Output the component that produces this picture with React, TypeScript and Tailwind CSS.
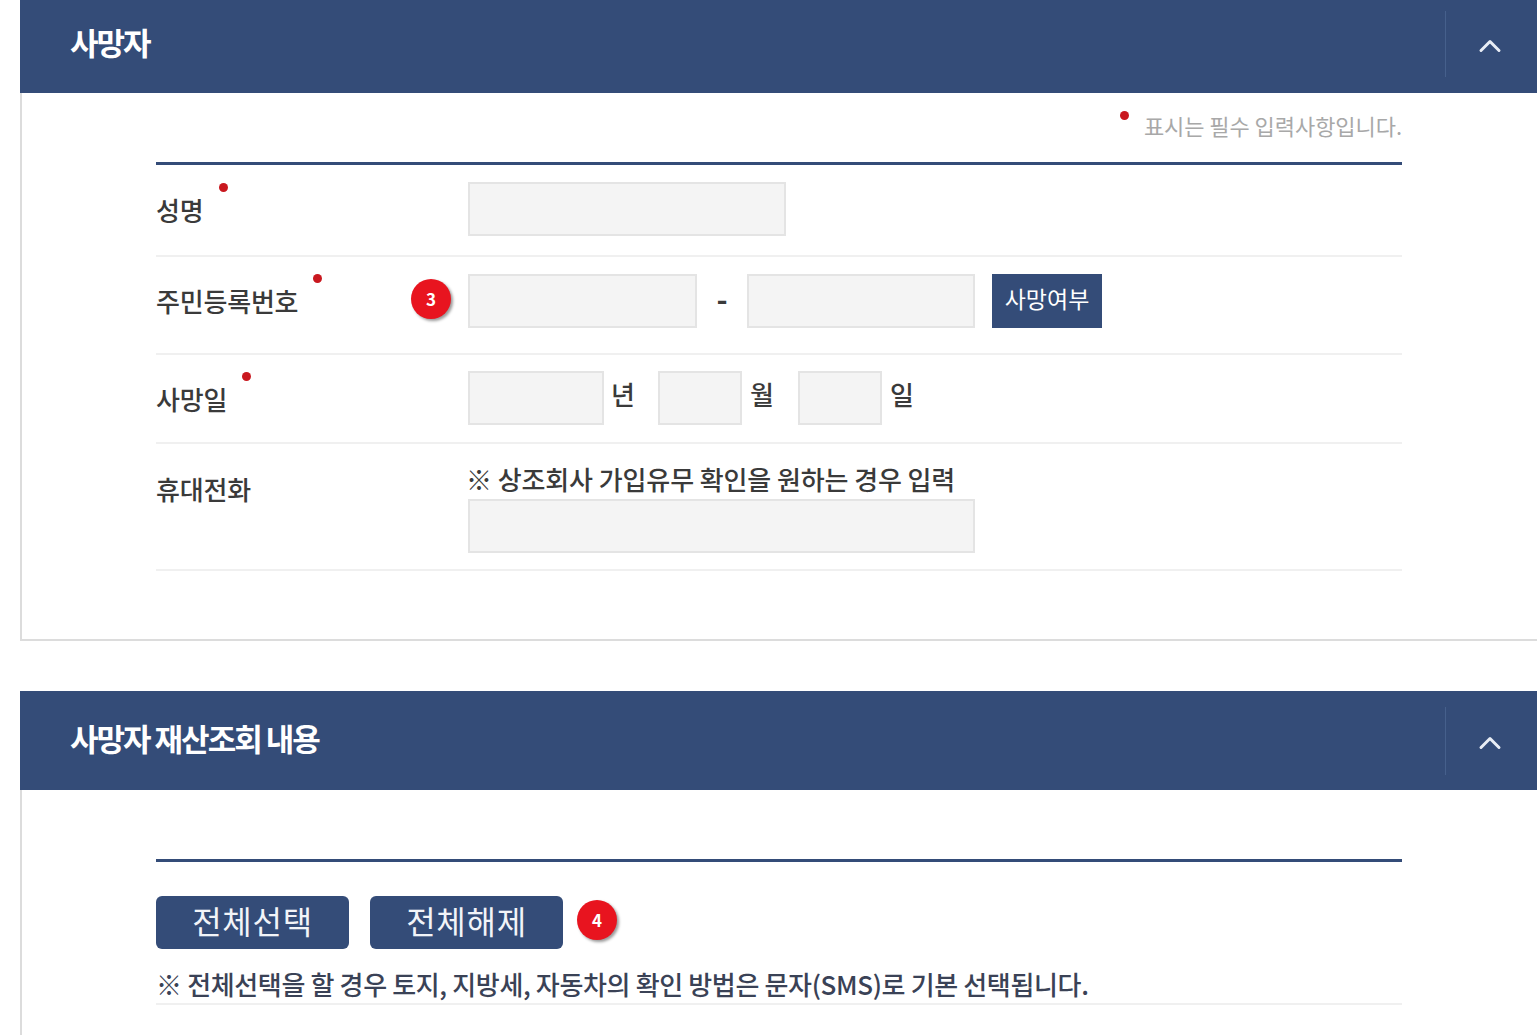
import { ChevronUp } from "lucide-react";

const font = { fontFamily: '"Noto Sans CJK KR", "Noto Sans", sans-serif' };

function Dot({ className }: { className: string }) {
  return <span className={`absolute h-[9px] w-[9px] rounded-full bg-[#c9181f] ${className}`} />;
}

function Badge({ n, className }: { n: number; className: string }) {
  return (
    <span
      className={`absolute flex h-[40px] w-[40px] items-center justify-center rounded-full bg-[#e8141f] text-[17px] font-bold text-white shadow-[2px_2px_3px_rgba(0,0,0,0.4)] ${className}`}
    >
      {n}
    </span>
  );
}

function Field({ className }: { className: string }) {
  return <div className={`h-[54px] border-2 border-[#e4e4e4] bg-[#f4f4f4] ${className}`} />;
}

function Header({ title, className, titleClass, dividerClass }: { title: string; className: string; titleClass: string; dividerClass: string }) {
  return (
    <div className={`flex items-center justify-between bg-[#344c78] ${className}`}>
      <h2 className={`ml-[50px] text-[31px] font-bold tracking-[-2px] text-white ${titleClass}`}>{title}</h2>
      <div className={`flex w-[92px] items-center justify-center border-l border-[#46608c] pr-[4px] pt-[3px] ${dividerClass}`}>
        <ChevronUp className="h-[36px] w-[36px] text-[#e8edf5]" strokeWidth={2} />
      </div>
    </div>
  );
}

function Label({ text, dot, className }: { text: string; dot?: string; className: string }) {
  return (
    <div className={`relative w-[312px] shrink-0 text-[26px] font-medium leading-[36px] tracking-[-0.2px] text-[#3a3a3a] ${className}`}>
      {text}
      {dot && <Dot className={dot} />}
    </div>
  );
}

export default function App() {
  return (
    <div className="h-[1035px] w-full overflow-hidden bg-white pl-[20px]" style={font}>
      <section className="h-[641px] border-b-2 border-l-2 border-[#dcdcdc]">
        <Header title="사망자" className="-ml-[2px] h-[93px]" titleClass="mb-[8px]" dividerClass="mb-[5px] h-[66px]" />
        <div className="ml-[134px] w-[1246px]">
          <div className="relative flex h-[69px] justify-end pt-[16px] text-[22px] leading-[32px] tracking-[-0.05px] text-[#a8a8a8]">
            <Dot className="left-[964px] top-[18px]" />
            표시는 필수 입력사항입니다.
          </div>
          <div className="border-t-[3px] border-[#344c78]">
            <div className="flex h-[92px] border-b-2 border-[#f0f0f0] pt-[17px]">
              <Label text="성명" dot="left-[63px] top-[1px]" className="pt-[10px]" />
              <Field className="w-[318px]" />
            </div>
            <div className="flex h-[98px] border-b-2 border-[#f0f0f0] pt-[17px]">
              <div className="relative">
                <Label text="주민등록번호" dot="left-[157px] top-[0px]" className="pt-[9px]" />
                <Badge n={3} className="left-[255px] top-[5px]" />
              </div>
              <Field className="w-[229px]" />
              <span className="flex h-[54px] w-[50px] items-center justify-center pb-[6px] text-[30px] font-bold text-[#3a3a3a]">-</span>
              <Field className="w-[228px]" />
              <button className="ml-[17px] h-[54px] w-[110px] bg-[#344c78] pb-[6px] text-[23px] text-white">
                사망여부
              </button>
            </div>
            <div className="flex h-[89px] border-b-2 border-[#f0f0f0] pt-[16px] text-[26px] text-[#3a3a3a]">
              <Label text="사망일" dot="left-[86px] top-[1px]" className="pt-[10px]" />
              <Field className="w-[136px]" />
              <span className="ml-[7px] w-[47px] pt-[1px] font-medium leading-[44px]">년</span>
              <Field className="w-[84px]" />
              <span className="ml-[8px] w-[48px] pt-[1px] font-medium leading-[44px]">월</span>
              <Field className="w-[84px]" />
              <span className="ml-[8px] pt-[1px] font-medium leading-[44px]">일</span>
            </div>
            <div className="flex h-[127px] border-b-2 border-[#f0f0f0] pt-[27px]">
              <Label text="휴대전화" className="pt-0" />
              <div>
                <p className="-ml-[2px] -mt-[1px] h-[29px] whitespace-nowrap text-[26px] font-medium leading-[18px] tracking-[-0.1px] text-[#3a3a3a]">
                  ※ 상조회사 가입유무 확인을 원하는 경우 입력
                </p>
                <Field className="w-[507px]" />
              </div>
            </div>
          </div>
        </div>
      </section>

      <section className="mt-[50px] h-[400px] border-l-2 border-[#dcdcdc]">
        <Header title="사망자 재산조회 내용" className="-ml-[2px] h-[99px]" titleClass="mb-[4px]" dividerClass="mt-[1px] h-[68px]" />
        <div className="ml-[134px] mt-[69px] w-[1246px] border-t-[3px] border-[#344c78]">
          <div className="relative flex gap-[21px] pt-[34px]">
            <button className="h-[53px] w-[193px] rounded-[6px] bg-[#344c78] pb-[6px] text-[32px] tracking-[0.7px] text-[#f2f4f8]">전체선택</button>
            <button className="h-[53px] w-[193px] rounded-[6px] bg-[#344c78] pb-[6px] text-[32px] tracking-[0.7px] text-[#f2f4f8]">전체해제</button>
            <Badge n={4} className="left-[421px] top-[38px]" />
          </div>
          <p className="mt-[18px] h-[38px] whitespace-nowrap border-b-2 border-[#f0f0f0] pt-[2px] text-[26px] font-medium leading-[30px] tracking-[-0.35px] text-[#3a4256]">
            ※ 전체선택을 할 경우 토지, 지방세, 자동차의 확인 방법은 문자(SMS)로 기본 선택됩니다.
          </p>
        </div>
      </section>
    </div>
  );
}
